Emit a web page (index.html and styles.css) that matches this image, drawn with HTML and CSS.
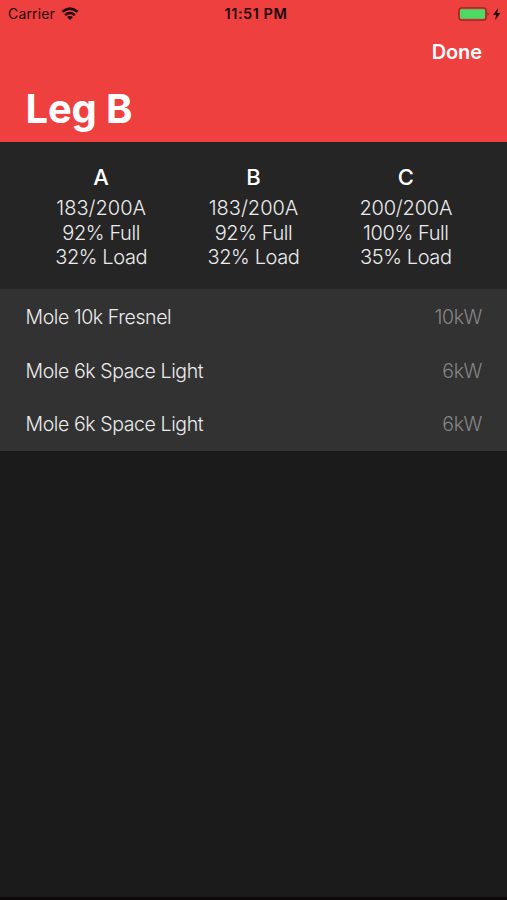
FILE: index.html
```html
<!DOCTYPE html>
<html lang="en">
<head>
<meta charset="utf-8">
<title>Leg B</title>
<link rel="stylesheet" href="styles.css">
</head>
<body>
<header class="header">
  <div class="status">
    <div class="carrier"><span class="carrier-name">Carrier</span>
      <svg width="18" height="14" viewBox="0 0 18 14" fill="#1c0808"><path d="M.6 3.800Q9-3.500 17.400 3.800L15.700 5.700Q9 .2 2.300 5.700Z"/><path d="M3.300 7.200Q9 2.500 14.700 7.200L13 9Q9 5.700 5 9Z"/><path d="M6 10Q9 7.800 12 10L9 13Z"/></svg>
    </div>
    <span class="time">11:51 PM</span>
    <div class="power">
      <svg width="44" height="14" viewBox="0 0 44 14"><rect x=".9" y=".9" width="27.200" height="12.200" rx="2.500" fill="none" stroke="#8f2826" stroke-width="1.400"/><rect x="2" y="2.300" width="25" height="9.400" rx="1" fill="#4cd964"/><path d="M29.500 5q2.500 2 0 4z" fill="#8f2826"/><path d="M40.200 1L35 8h3.200L37 13.200L42.400 6h-3.300z" fill="#1c0808"/></svg>
    </div>
  </div>
  <div class="nav"><span>Done</span></div>
  <h1 class="title">Leg B</h1>
</header>
<section class="legs">
  <div class="leg"><h2>A</h2><p class="amps">183/200A</p><p>92% Full</p><p>32% Load</p></div>
  <div class="leg"><h2>B</h2><p class="amps">183/200A</p><p>92% Full</p><p>32% Load</p></div>
  <div class="leg"><h2>C</h2><p class="amps-wide">200/200A</p><p>100% Full</p><p>35% Load</p></div>
</section>
<ul class="list">
  <li><span>Mole 10k Fresnel</span><span class="watt">10kW</span></li>
  <li><span>Mole 6k Space Light</span><span class="watt">6kW</span></li>
  <li><span>Mole 6k Space Light</span><span class="watt">6kW</span></li>
</ul>
</body>
</html>
```
FILE: styles.css
```css
* { box-sizing: border-box; margin: 0; padding: 0; }
body { background: #1b1b1b; color: #fff; font-family: Inter, "Liberation Sans", sans-serif; height: 900px; display: flex; flex-direction: column; border-bottom: 3px solid #0d080a; white-space: nowrap; }
.header { background: #ef4040; height: 142px; }
.status { height: 27px; display: grid; grid-template-columns: 1fr auto 1fr; align-items: center; color: #1c0808; font-size: 14px; padding: 0 5px 0 8px; }
.carrier { display: flex; align-items: center; gap: 6px; }
.carrier-name { letter-spacing: .15px; }
.time { font-weight: 600; font-size: 14.500px; letter-spacing: .55px; padding-left: 2px; }
.power { display: flex; justify-content: flex-end; }
.nav { height: 50px; display: flex; justify-content: flex-end; align-items: center; padding-right: 25px; font-size: 20px; font-weight: 600; letter-spacing: -.1px; }
.title { padding-left: 25.500px; line-height: 64px; font-size: 40px; font-weight: 700; letter-spacing: -.2px; }
.legs { height: 147px; background: #252525; display: grid; grid-template-columns: repeat(3, 1fr); padding: 22px 25px 0; text-align: center; }
.leg h2 { font-size: 22px; font-weight: 500; line-height: 27px; height: 32px; }
.leg p { color: #ececec; font-size: 20px; font-weight: 300; line-height: 24.5px; letter-spacing: -.4px; }
.leg .amps { letter-spacing: 0; }
.leg .amps-wide { letter-spacing: -.2px; }
.list { list-style: none; background: #323232; height: 161.500px; }
.list li { color: #ececec; height: 53.800px; display: flex; justify-content: space-between; align-items: center; padding: 2px 25px 0 25.500px; font-size: 19.500px; font-weight: 300; letter-spacing: -.4px; }
.list .watt { color: #858585; }
```
